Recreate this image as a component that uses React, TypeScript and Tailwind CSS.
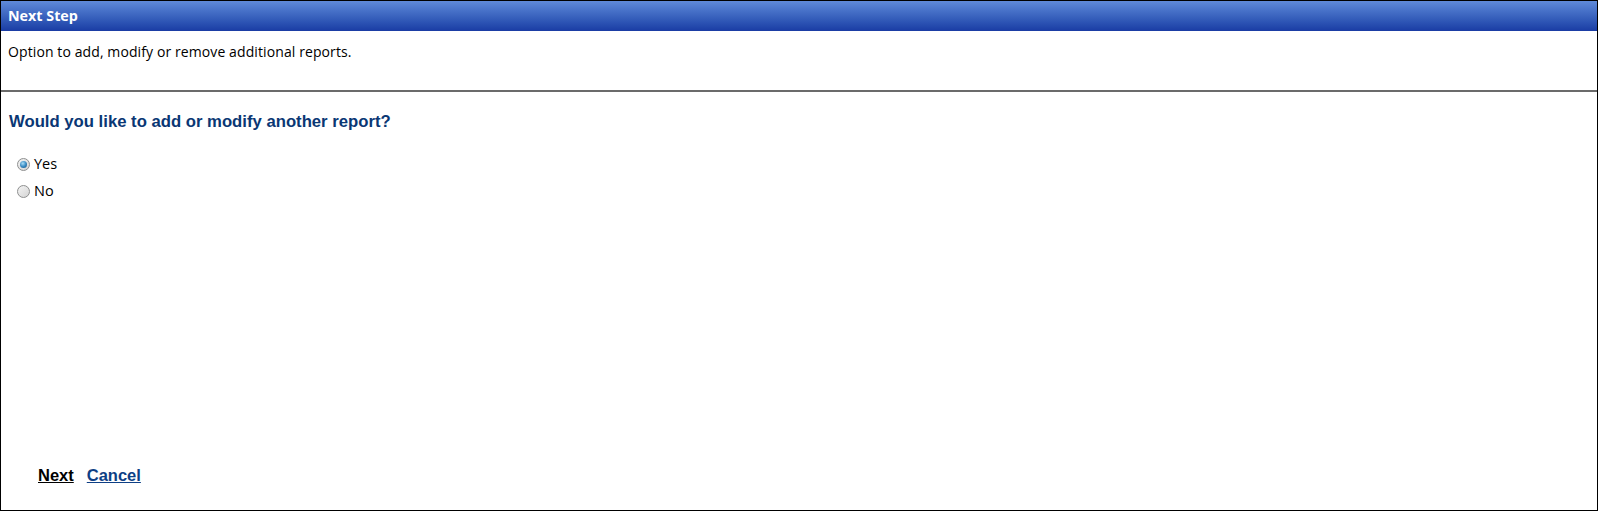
import React from "react";

function Radio({ checked, label }: { checked?: boolean; label: string }) {
  return (
    <label className="flex items-center h-[27px]">
      <span className="relative w-[13px] h-[13px] rounded-full border border-[#8e8f8f] bg-gradient-to-br from-[#f4f4f4] to-[#d4d4d4] flex items-center justify-center">
        {checked && (
          <span className="w-[7px] h-[7px] rounded-full bg-[radial-gradient(circle_at_40%_35%,#a8dcf5_0%,#3a8cc4_50%,#16507e_100%)]" />
        )}
      </span>
      <span className="ml-[4px] text-[14.5px] text-black leading-none">
        {label}
      </span>
    </label>
  );
}

export default function App() {
  return (
    <div className="w-[1598px] h-[511px] border border-black bg-white flex flex-col">
      <div className="h-[30px] bg-gradient-to-b from-[#5f8ad9] to-[#1a3ca4] flex items-center px-[7px]">
        <span className="text-white font-bold text-[14.3px] font-['Open_Sans',sans-serif]">
          Next Step
        </span>
      </div>
      <div className="h-[61px] border-b-2 border-[#6b6b6b] px-[7px] pt-[10px]">
        <p className="text-[14px] text-black font-['Open_Sans',sans-serif] tracking-[0.1px]">
          Option to add, modify or remove additional reports.
        </p>
      </div>
      <div className="flex-1 flex flex-col px-[8px] pt-[20px] font-['Liberation_Sans',Arial,sans-serif]">
        <h2 className="text-[16.7px] font-bold text-[#0a3774] leading-[19px]">
          Would you like to add or modify another report?
        </h2>
        <div className="mt-[20px] pl-[8px] flex flex-col font-['Open_Sans',sans-serif]">
          <Radio checked label="Yes" />
          <Radio label="No" />
        </div>
        <div className="flex-1" />
        <div className="flex items-center gap-[13px] pl-[29px] pb-[26px]">
          <a href="#" className="text-[16.5px] font-bold text-black underline leading-[18px]">
            Next
          </a>
          <a href="#" className="text-[16.5px] font-bold text-[#0e3f85] underline leading-[18px]">
            Cancel
          </a>
        </div>
      </div>
    </div>
  );
}
